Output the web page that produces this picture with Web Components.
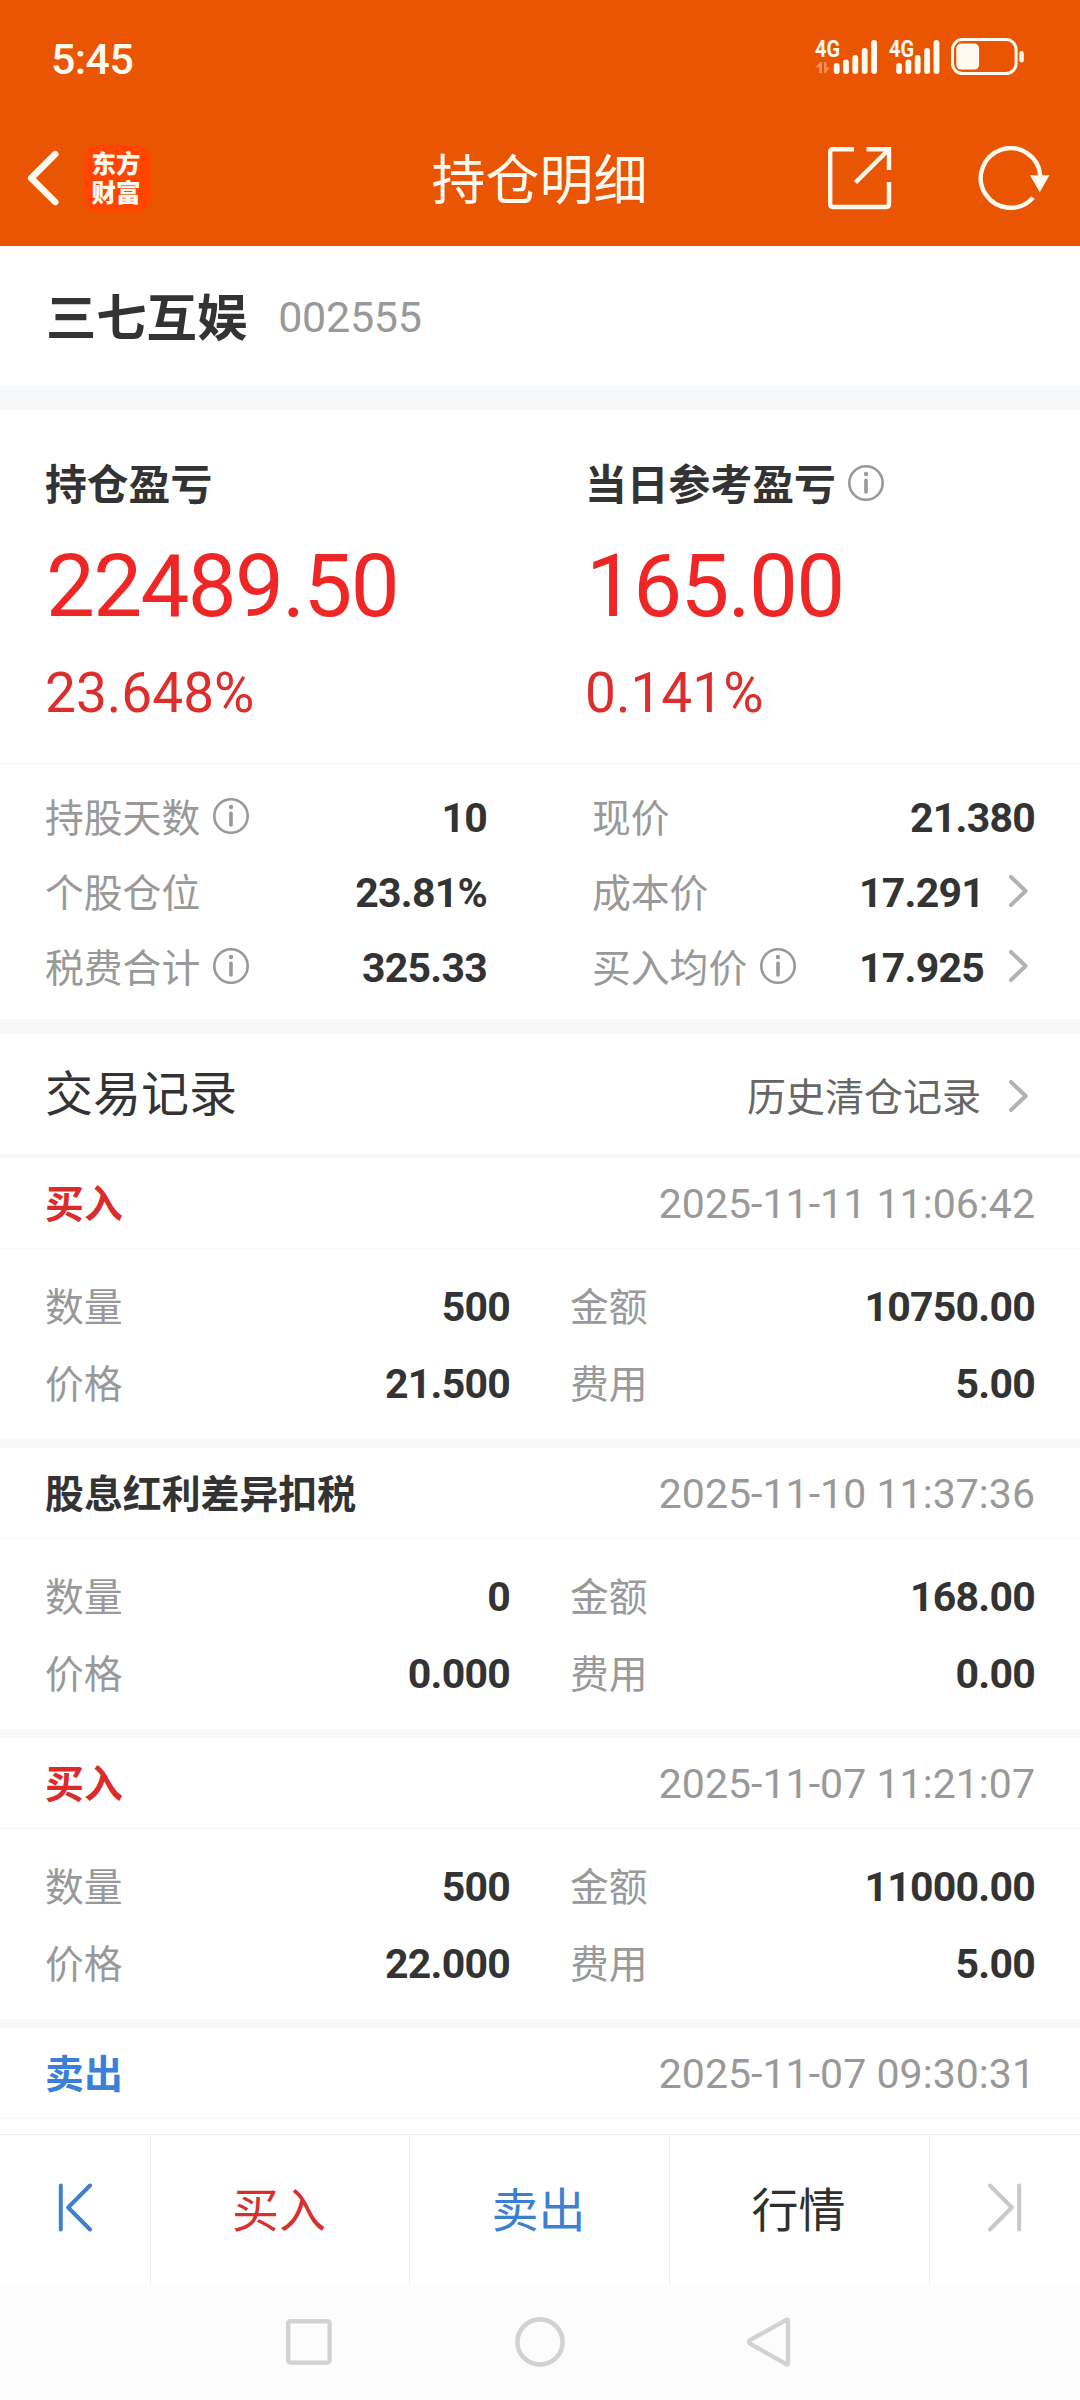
<!DOCTYPE html>
<html lang="zh-CN">
<head>
<meta charset="utf-8">
<title>持仓明细</title>
<style>
  html, body { margin: 0; padding: 0; background: #fff; }
  body { width: 1080px; height: 2400px; overflow: hidden; font-family: "Noto Sans CJK SC", sans-serif; color: #333; }
</style>
</head>
<body>
<position-page></position-page>
<script>
const BASE = `*{box-sizing:border-box}.num{font-family:Roboto,"Noto Sans CJK SC",sans-serif;white-space:pre}`;

function define(name, render) {
  customElements.define(name, class extends HTMLElement {
    constructor() {
      super();
      this.attachShadow({ mode: 'open' });
    }
    connectedCallback() {
      const t = document.createElement('template');
      t.innerHTML = `<style>${BASE}</style>` + render(this);
      this.shadowRoot.replaceChildren(t.content.cloneNode(true));
    }
  });
}

define('info-icon', () => `
  <style>:host{display:block;width:36px;height:36px;flex:none}svg{display:block}</style>
  <svg width="36" height="36" viewBox="0 0 36 36" fill="none" stroke="#999">
    <circle cx="18" cy="18" r="16.7" stroke-width="2.6"/>
    <path d="M18 15.2V27" stroke-width="3.6" stroke-linecap="round"/>
    <circle cx="18" cy="9" r="2.2" fill="#999" stroke="none"/>
  </svg>`);

define('chevron-icon', () => `
  <style>:host{display:block;width:19px;height:32px;flex:none}svg{display:block}</style>
  <svg width="19" height="32" viewBox="0 0 19 32" fill="none" stroke="#b2b2b2" stroke-width="4" stroke-linecap="round" stroke-linejoin="round">
    <path d="M2 2L16.6 16L2 30"/>
  </svg>`);

const bars = (x0) => [[0, 26], [9.3, 22.5], [18.6, 18], [28, 11], [37.4, 3]]
  .map(([dx, y]) => `<rect x="${x0 + dx}" y="${y}" width="5.8" height="${37 - y}" rx="2.9"/>`).join('');

define('status-bar', () => `
  <style>
    :host{display:flex;justify-content:space-between;height:118px;padding:0 56px 0 51px;color:#fffaf0}
    .time{font-size:43px;font-weight:500;line-height:118px;letter-spacing:-.6px}
    svg{display:block;margin-top:37px}
    text{font-family:Roboto,sans-serif;font-weight:700;font-size:23px}
  </style>
  <span class="time num">5:45</span>
  <svg width="209" height="40" viewBox="0 0 209 40" fill="#fffaf0">
    <text x="0" y="19.5" textLength="25" lengthAdjust="spacingAndGlyphs">4G</text>
    <g opacity=".35"><path d="M0 31L5 25h2v11H4v-6z"/><path d="M9 25h2.5v5.5H15L10.5 36H9z"/></g>
    ${bars(18.8)}
    <text x="74" y="19.5" textLength="25" lengthAdjust="spacingAndGlyphs">4G</text>
    ${bars(81.2)}
    <rect x="137.5" y="2.6" width="63.6" height="34" rx="10" fill="none" stroke="#fffaf0" stroke-width="3"/>
    <rect x="141.3" y="6.6" width="22.8" height="26" rx="5"/>
    <rect x="204.4" y="14" width="4.4" height="11.4" rx="2.2"/>
  </svg>`);

define('title-bar', () => `
  <style>
    :host{display:grid;grid-template-columns:1fr auto 1fr;align-items:center;height:128px;padding:0 30px 8px 27px;color:#fffaf0}
    .left{display:flex;align-items:center;gap:24.5px}
    .right{display:flex;align-items:center;justify-content:flex-end;gap:86px}
    h1{margin:0;font-size:54px;font-weight:400;line-height:64px;padding:0 0 3px 2px}
    .logo{width:67px;height:67px;border-radius:15px;background:#ff4500;font-size:24.5px;font-weight:900;line-height:29px;padding:3px 0 0 8px;display:grid;align-content:start}
    svg{display:block}
  </style>
  <div class="left">
    <svg width="32" height="56" viewBox="0 0 32 56" fill="none" stroke="#fffaf0" stroke-width="6.6" stroke-linecap="round" stroke-linejoin="round"><path d="M28.2 4.2L4.2 28.2L28.2 52"/></svg>
    <div class="logo"><span>东方</span><span>财富</span></div>
  </div>
  <h1>持仓明细</h1>
  <div class="right">
    <svg width="64" height="64" viewBox="0 0 64 64" fill="none" stroke="#fffaf0" stroke-width="4.4">
      <path d="M26 3.2H5.2Q2.2 3.2 2.2 6.2V58Q2.2 61 5.2 61H58Q61 61 61 58V36"/>
      <path d="M38.5 3.2H61V24"/><path d="M61 3.2L27.5 36.5"/>
    </svg>
    <svg width="72" height="64" viewBox="0 0 72 64" fill="none" stroke="#fffaf0" stroke-width="4.4">
      <path d="M62.3 30A29.8 29.8 0 1 0 55 51.6" stroke-linecap="butt"/>
      <path d="M52 29.3H71.4L61.7 46.3Z" fill="#fffaf0" stroke="none"/>
    </svg>
  </div>`);

define('app-header', () => `
  <style>:host{display:block;height:246px;background:#ea5504}</style>
  <status-bar></status-bar><title-bar></title-bar>`);

define('stock-head', () => `
  <style>
    :host{display:flex;gap:31px;height:140px;padding-left:46px}
    b{font-size:50.3px;line-height:137px}
    .num{font-size:43px;line-height:143px;color:#999;letter-spacing:-.25px}
  </style>
  <b><slot name="name"></slot></b><span class="num"><slot name="code"></slot></span>`);

define('profit-block', (el) => `
  <style>
    :host{display:block}
    .t{display:flex;align-items:flex-start;gap:12.5px;font-size:41.8px;font-weight:700;line-height:60px}
    info-icon{margin-top:13px}
    .big{font-size:87px;line-height:148px;letter-spacing:-1.65px;color:#ee2625;margin-left:1px}
    .pct{font-size:55px;line-height:66px;color:#dc2e2c}
  </style>
  <div class="t"><slot></slot>${el.hasAttribute('info') ? '<info-icon></info-icon>' : ''}</div>
  <div class="big num">${el.getAttribute('value')}</div>
  <div class="pct num">${el.getAttribute('percent')}</div>`);

define('profit-card', () => `
  <style>:host{display:grid;grid-template-columns:540px 494px;height:354px;padding:42px 0 0 45px;border-bottom:1px solid #f4f5f7}</style>
  <slot></slot>`);

define('stat-item', (el) => `
  <style>
    :host{display:flex;align-items:baseline;height:75px;line-height:75px}
    .l{font-size:38.8px;color:#999}
    info-icon{align-self:flex-start;margin:19.5px 0 0 13px}
    .num{margin-left:auto;font-size:41px;font-weight:700;letter-spacing:-.75px}
    chevron-icon{align-self:flex-start;margin:21.5px 7px 0 25px}
  </style>
  <span class="l"><slot></slot></span>
  ${el.hasAttribute('info') ? '<info-icon></info-icon>' : ''}
  <span class="num">${el.getAttribute('value')}</span>
  ${el.hasAttribute('link') ? '<chevron-icon></chevron-icon>' : ''}`);

define('stat-grid', () => `
  <style>:host{display:grid;grid-template-columns:442px 443px;grid-auto-rows:75px;column-gap:105px;height:255px;padding:14px 45px 0}</style>
  <slot></slot>`);

define('band-gap', (el) => `
  <style>:host{display:block;height:${el.getAttribute('size')}px;background:${el.getAttribute('tone') || '#f6f8fa'}}</style>`);

define('section-head', () => `
  <style>
    :host{display:flex;align-items:baseline;height:120px;line-height:112px;padding:0 52px 0 45px}
    .t{font-size:48px}
    .m{margin-left:auto;font-size:39px;color:#666}
    chevron-icon{align-self:flex-start;margin:46px 0 0 28px}
  </style>
  <span class="t"><slot name="title"></slot></span><span class="m"><slot name="more"></slot></span><chevron-icon></chevron-icon>`);

define('trade-record', (el) => {
  const a = (n) => el.getAttribute(n);
  const tone = { buy: '#dc2b2b', sell: '#3a7fd8' }[a('kind')] || '#333';
  const details = a('qty') === null ? '' : `
  <div class="g">
    <div class="c"><span>数量</span><div class="num">${a('qty')}</div></div>
    <div class="c"><span>金额</span><div class="num">${a('amount')}</div></div>
    <div class="c"><span>价格</span><div class="num">${a('price')}</div></div>
    <div class="c"><span>费用</span><div class="num">${a('fee')}</div></div>
  </div>`;
  return `
  <style>
    :host{display:block;height:290px;border-bottom:9px solid #f6f8fa}
    .h{display:flex;align-items:baseline;justify-content:space-between;height:91px;line-height:87px;padding:0 45px;border-bottom:1px solid #f6f6f7}
    .h b{font-size:38.9px;color:${tone}}
    .h .num{font-size:41px;color:#999;letter-spacing:.05px}
    .g{display:grid;grid-template-columns:465px 465px;column-gap:60px;grid-auto-rows:77px;padding:17px 45px 0;line-height:77px}
    .c{display:flex;align-items:baseline;justify-content:space-between;height:77px}
    .c span{font-size:38.8px;color:#999}
    .c .num{font-size:41px;font-weight:700;letter-spacing:-.75px}
  </style>
  <div class="h"><b><slot></slot></b><span class="num">${a('time')}</span></div>${details}`;
});

define('trade-list', () => `
  <style>:host{display:block;height:976px;overflow:hidden}</style><slot></slot>`);

define('action-bar', () => `
  <style>
    :host{display:grid;grid-template-columns:150px 259px 260px 260px 151px;height:150px;border-top:1px solid #ececec;background:#fff}
    div{display:flex;align-items:center;justify-content:center;padding-bottom:4px;font-size:47px;line-height:60px}
    div+div{border-left:1px solid #ececec}
    .txt{padding:0 2px 6px 0}
    svg{display:block}
  </style>
  <div><svg width="34" height="49" viewBox="0 0 34 49" fill="none" stroke="#3f7fcb" stroke-width="4" stroke-linecap="round" stroke-linejoin="round"><path d="M2.8 2.5V46.5M32 2.5L10.2 24.5L32 46.5"/></svg></div>
  <div class="txt" style="color:#d6302f">买入</div>
  <div class="txt" style="color:#3d7fd0">卖出</div>
  <div class="txt" style="color:#2f2f2f">行情</div>
  <div><svg width="34" height="49" viewBox="0 0 34 49" fill="none" stroke="#c8c8c8" stroke-width="4" stroke-linecap="round" stroke-linejoin="round"><path d="M31.2 2.5V46.5M2 2.5L23.8 24.5L2 46.5"/></svg></div>`);

define('system-nav', () => `
  <style>
    :host{display:flex;justify-content:center;gap:181px;align-items:center;height:116px;background:#fcfcfc}
    svg{display:block}
  </style>
  <svg width="50" height="52" viewBox="0 0 50 52" fill="none" stroke="#d2d2d2" stroke-width="4.4"><rect x="4.2" y="5.2" width="41.4" height="41.4" rx="2.4"/></svg>
  <svg width="50" height="52" viewBox="0 0 50 52" fill="none" stroke="#d2d2d2" stroke-width="4.6"><circle cx="25" cy="26" r="22.6"/></svg>
  <svg width="50" height="52" viewBox="0 0 50 52" fill="none" stroke="#d2d2d2" stroke-width="4.4" stroke-linejoin="round"><path d="M42 4.6Q42 3 40.3 3.8L3.9 24.2Q1.9 26 3.9 27.6L40.3 48.2Q42 49 42 47.4Z"/></svg>`);

define('position-page', () => `
  <style>:host{display:flex;flex-direction:column;width:1080px;height:2400px}:host>*{flex:none}</style>
  <app-header></app-header>
  <stock-head><span slot="name">三七互娱</span><span slot="code">002555</span></stock-head>
  <band-gap size="24"></band-gap>
  <profit-card>
    <profit-block value="22489.50" percent="23.648%">持仓盈亏</profit-block>
    <profit-block value="165.00" percent="0.141%" info>当日参考盈亏</profit-block>
  </profit-card>
  <stat-grid>
    <stat-item value="10" info>持股天数</stat-item><stat-item value="21.380">现价</stat-item>
    <stat-item value="23.81%">个股仓位</stat-item><stat-item value="17.291" link>成本价</stat-item>
    <stat-item value="325.33" info>税费合计</stat-item><stat-item value="17.925" info link>买入均价</stat-item>
  </stat-grid>
  <band-gap size="15"></band-gap>
  <section-head><span slot="title">交易记录</span><span slot="more">历史清仓记录</span></section-head>
  <band-gap size="4" tone="#f7f8f9"></band-gap>
  <trade-list>
    <trade-record kind="buy" time="2025-11-11 11:06:42" qty="500" amount="10750.00" price="21.500" fee="5.00">买入</trade-record>
    <trade-record time="2025-11-10 11:37:36" qty="0" amount="168.00" price="0.000" fee="0.00">股息红利差异扣税</trade-record>
    <trade-record kind="buy" time="2025-11-07 11:21:07" qty="500" amount="11000.00" price="22.000" fee="5.00">买入</trade-record>
    <trade-record kind="sell" time="2025-11-07 09:30:31">卖出</trade-record>
  </trade-list>
  <action-bar></action-bar>
  <system-nav></system-nav>`);
</script>
</body>
</html>
